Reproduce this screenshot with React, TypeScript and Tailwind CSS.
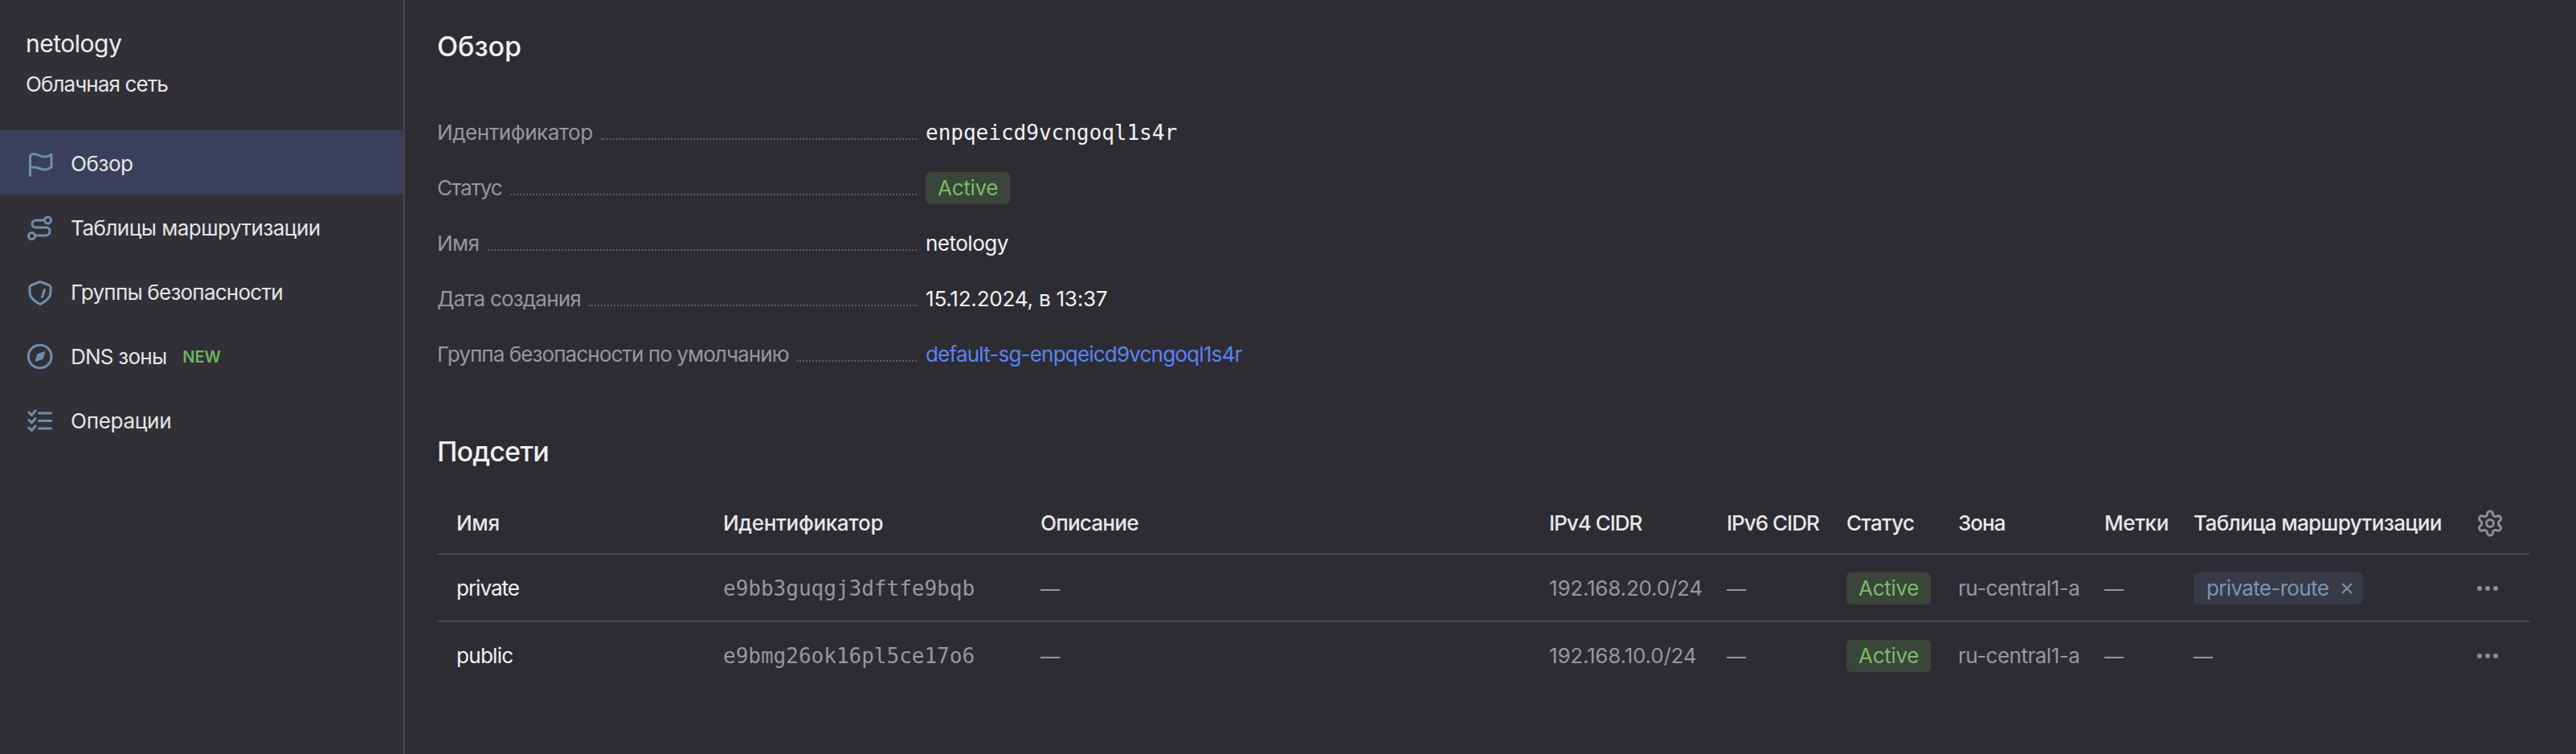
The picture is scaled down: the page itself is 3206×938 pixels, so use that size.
import React from "react";

const font = { fontFamily: '"Inter", "Noto Sans", sans-serif' };
const C = "#6f8dab";

function Flag() {
  return (
    <svg className="block" width="32" height="36" viewBox="0 0 32 36" fill="none" stroke={C} strokeWidth="3" strokeLinecap="round" strokeLinejoin="round">
      <path d="M3.500 34.500V11c0-2 1.500-3.500 4.500-3.500 6 0 8 3.500 14 3.500 3 0 5-1 8-3V24c-3 2-5 3-8 3-6 0-8-3-14-3-2 0-3.500.3-4.500.8" />
    </svg>
  );
}
function RouteIcon() {
  return (
    <svg className="block" width="32" height="36" viewBox="0 0 32 36" fill="none" stroke={C} strokeWidth="3" strokeLinecap="round" strokeLinejoin="round" >
      <g transform="translate(0 2)">
        <circle cx="25.500" cy="8" r="4" />
        <circle cx="5.500" cy="27.500" r="4" />
        <path d="M21 8H11c-3 0-5 2-5 4.500 0 3 2 4.500 5 4.500h13c3 0 4 2.500 4 5 0 3-2.500 5-5.500 5H10" />
      </g>
    </svg>
  );
}
function Shield() {
  return (
    <svg className="block" width="32" height="36" viewBox="0 0 32 36" fill="none" stroke={C} strokeWidth="3" strokeLinecap="round" strokeLinejoin="round">
      <path d="M14.500 7 4.500 11A2.500 2.500 0 0 0 3 13.300V20c0 6 6.500 11.500 13 14.500 6.500-3 13-8.500 13-14.500v-6.700A2.500 2.500 0 0 0 27.500 11L17.500 7a4 4 0 0 0-3 0z" />
      <path d="M21.500 16.500l-3 9" />
    </svg>
  );
}
function Compass() {
  return (
    <svg className="block" width="32" height="36" viewBox="0 0 32 36" fill="none">
      <circle cx="15.700" cy="19.500" r="14.300" stroke={C} strokeWidth="3" />
      <path d="M21.500 14l-2.500 8L10.500 25l2.500-8z" fill={C} stroke={C} strokeWidth="1.500" strokeLinejoin="round" />
    </svg>
  );
}
function Checks() {
  return (
    <svg className="block" width="32" height="36" viewBox="0 0 32 36" fill="none" stroke={C} strokeLinecap="round" strokeLinejoin="round">
      <path d="M2 9l3.500 3.500L10 7M2 18.500l3.500 3.500 4.500-5.500M2 28l3.500 3.500 4.500-5.500" strokeWidth="3" />
      <path d="M14.500 10h15M14.500 19.500h15M14.500 29h15" strokeWidth="3.200" />
    </svg>
  );
}
function Gear() {
  return (
    <svg className="block" width="36" height="36" viewBox="0 0 24 24" fill="none" stroke="#8e8d92" strokeWidth="2" strokeLinecap="round" strokeLinejoin="round">
      <path d="M12.220 2h-.44a2 2 0 0 0-2 2v.180a2 2 0 0 1-1 1.730l-.43.250a2 2 0 0 1-2 0l-.150-.080a2 2 0 0 0-2.730.730l-.220.380a2 2 0 0 0 .730 2.730l.150.100a2 2 0 0 1 1 1.720v.510a2 2 0 0 1-1 1.740l-.150.090a2 2 0 0 0-.730 2.730l.220.380a2 2 0 0 0 2.730.730l.150-.080a2 2 0 0 1 2 0l.430.250a2 2 0 0 1 1 1.730V20a2 2 0 0 0 2 2h.440a2 2 0 0 0 2-2v-.180a2 2 0 0 1 1-1.730l.430-.250a2 2 0 0 1 2 0l.150.080a2 2 0 0 0 2.730-.730l.220-.390a2 2 0 0 0-.730-2.730l-.150-.080a2 2 0 0 1-1-1.740v-.500a2 2 0 0 1 1-1.740l.150-.090a2 2 0 0 0 .730-2.730l-.220-.380a2 2 0 0 0-2.730-.730l-.150.080a2 2 0 0 1-2 0l-.430-.250a2 2 0 0 1-1-1.730V4a2 2 0 0 0-2-2z" />
      <circle cx="12" cy="12" r="3" />
    </svg>
  );
}
function Dots() {
  return (
    <span className="flex items-center justify-center gap-[4px] w-[28px]">
      <span className="w-[6px] h-[6px] rounded-full bg-[#8e8d92]" />
      <span className="w-[6px] h-[6px] rounded-full bg-[#8e8d92]" />
      <span className="w-[6px] h-[6px] rounded-full bg-[#8e8d92]" />
    </span>
  );
}
function Active() {
  return (
    <span className="inline-flex items-center justify-center h-[40px] px-[15px] rounded-[6px] bg-[#3a4639] text-[#77bb6b] text-[26px] tracking-[-0.3px]">
      Active
    </span>
  );
}
function Dash() {
  return <span className="text-[#98979c] text-[24px]">—</span>;
}

const mono = "[font-family:'DejaVu_Sans_Mono',monospace]";

const nav = [
  { icon: <Flag />, label: "Обзор", active: true, tr: "tracking-[-0.4px]" },
  { icon: <RouteIcon />, label: "Таблицы маршрутизации", tr: "tracking-[-0.5px]" },
  { icon: <Shield />, label: "Группы безопасности", tr: "tracking-[-0.75px]" },
  { icon: <Compass />, label: "DNS зоны", tag: "NEW", tr: "tracking-[-0.75px]" },
  { icon: <Checks />, label: "Операции", tr: "tracking-[-0.25px]" },
];

function Row({ label, tr, children }: { label: string; tr: string; children: React.ReactNode }) {
  return (
    <div className="flex items-center h-[69px]">
      <div className="flex w-[597px] items-baseline">
        <span className={`text-[#98979c] whitespace-nowrap ${tr}`}>{label}</span>
        <span className="flex-1 ml-[10px] border-b-2 border-dotted border-[#5f5e64]" />
      </div>
      <div className="ml-[11px] text-[#f2f2f3]">{children}</div>
    </div>
  );
}

const grid = "grid grid-cols-[332px_395px_633px_221px_149px_139px_182px_111px_352px_1fr] items-center";
const cell = "pl-[24px] whitespace-nowrap";

const headers = [
  { h: "Имя", tr: "tracking-[-0.3px]" },
  { h: "Идентификатор", tr: "tracking-[-0.3px]" },
  { h: "Описание", tr: "tracking-[-0.75px]" },
  { h: "IPv4 CIDR", tr: "tracking-[-1px]" },
  { h: "IPv6 CIDR", tr: "tracking-[-1px]" },
  { h: "Статус", tr: "tracking-[-0.7px]" },
  { h: "Зона", tr: "tracking-[-1px]" },
  { h: "Метки", tr: "tracking-[-0.4px]" },
  { h: "Таблица маршрутизации", tr: "tracking-[-0.6px]" },
];

export default function App() {
  return (
    <div style={font} className="flex w-[3206px] h-[938px] bg-[#2d2c33] text-[26px] leading-[32px] overflow-hidden">
      <aside className="w-[504px] shrink-0 h-full bg-[#313037] border-r-2 border-[#49484e]">
        <div className="pt-[36px] pl-[32px] h-[162px]">
          <div className="text-[30px] leading-[36px] text-[#eeeeef] tracking-[-0.5px]">netology</div>
          <div className="mt-[17px] text-[#e6e6e7] tracking-[-0.9px]">Облачная сеть</div>
        </div>
        <nav>
          {nav.map((n) => (
            <div
              key={n.label}
              className={`flex items-center h-[80px] pl-[34px] rounded-r-[4px] ${n.active ? "bg-[#3a3f5c]" : ""}`}
            >
              <span className="w-[32px]">{n.icon}</span>
              <span className={`ml-[22px] pt-[4px] text-[#e6e6e7] whitespace-nowrap ${n.tr}`}>{n.label}</span>
              {n.tag && <span className="ml-[20px] pt-[4px] text-[20px] font-semibold text-[#6cb35d]">{n.tag}</span>}
            </div>
          ))}
        </nav>
      </aside>
      <main className="flex-1 min-w-0 pl-[40px] pr-[58px]">
        <h1 className="pt-[36px] text-[34px] leading-[44px] font-medium text-[#f0f0f1]">Обзор</h1>
        <section className="mt-[50px]">
          <Row label="Идентификатор" tr="tracking-[-0.45px]">
            <span className={mono}>enpqeicd9vcngoql1s4r</span>
          </Row>
          <Row label="Статус" tr="tracking-[-1.1px]">
            <Active />
          </Row>
          <Row label="Имя" tr="tracking-[-0.5px]"><span className="tracking-[-0.5px]">netology</span></Row>
          <Row label="Дата создания" tr="tracking-[-0.8px]"><span className="tracking-[-0.2px]">15.12.2024, в 13:37</span></Row>
          <Row label="Группа безопасности по умолчанию" tr="tracking-[-0.9px]">
            <span className="text-[#5b82f5] tracking-[-0.8px]">default-sg-enpqeicd9vcngoql1s4r</span>
          </Row>
        </section>
        <h2 className="mt-[65px] text-[34px] leading-[44px] font-medium text-[#f0f0f1] tracking-[-0.8px]">Подсети</h2>
        <section className="mt-[29px]">
          <div className={`${grid} h-[77px] border-b-2 border-[#49484e] text-[#e8e8e9] font-medium`}>
            {headers.map((c) => (
              <div key={c.h} className={`${cell} ${c.tr}`}>{c.h}</div>
            ))}
            <div className="pl-[23px]"><Gear /></div>
          </div>
          <div className={`${grid} h-[84px] pt-[2px] border-b-2 border-[#49484e]`}>
            <div className={`${cell} text-[#f2f2f3] tracking-[-1px]`}>private</div>
            <div className={`${cell} ${mono} text-[#98979c]`}>e9bb3guqgj3dftfe9bqb</div>
            <div className={cell}><Dash /></div>
            <div className={`${cell} text-[#98979c] tracking-[-0.2px]`}>192.168.20.0/24</div>
            <div className={cell}><Dash /></div>
            <div className={cell}><Active /></div>
            <div className={`${cell} text-[#98979c] tracking-[-0.5px]`}>ru-central1-a</div>
            <div className={cell}><Dash /></div>
            <div className={cell}>
              <span className="inline-flex items-center h-[40px] pl-[16px] pr-[12px] rounded-[6px] bg-[#383b47] text-[#7d95b0] tracking-[-0.65px]">
                private-route
                <svg className="ml-[15px]" width="16" height="16" viewBox="0 0 16 16" stroke="#7d95b0" strokeWidth="1.800"><path d="M2 2l12 12M14 2L2 14" /></svg>
              </span>
            </div>
            <div className="pl-[24px]"><Dots /></div>
          </div>
          <div className={`${grid} h-[84px]`}>
            <div className={`${cell} text-[#f2f2f3] tracking-[-0.7px]`}>public</div>
            <div className={`${cell} ${mono} text-[#98979c]`}>e9bmg26ok16pl5ce17o6</div>
            <div className={cell}><Dash /></div>
            <div className={`${cell} text-[#98979c] tracking-[-0.2px]`}>192.168.10.0/24</div>
            <div className={cell}><Dash /></div>
            <div className={cell}><Active /></div>
            <div className={`${cell} text-[#98979c] tracking-[-0.5px]`}>ru-central1-a</div>
            <div className={cell}><Dash /></div>
            <div className={cell}><Dash /></div>
            <div className="pl-[24px]"><Dots /></div>
          </div>
        </section>
      </main>
    </div>
  );
}
